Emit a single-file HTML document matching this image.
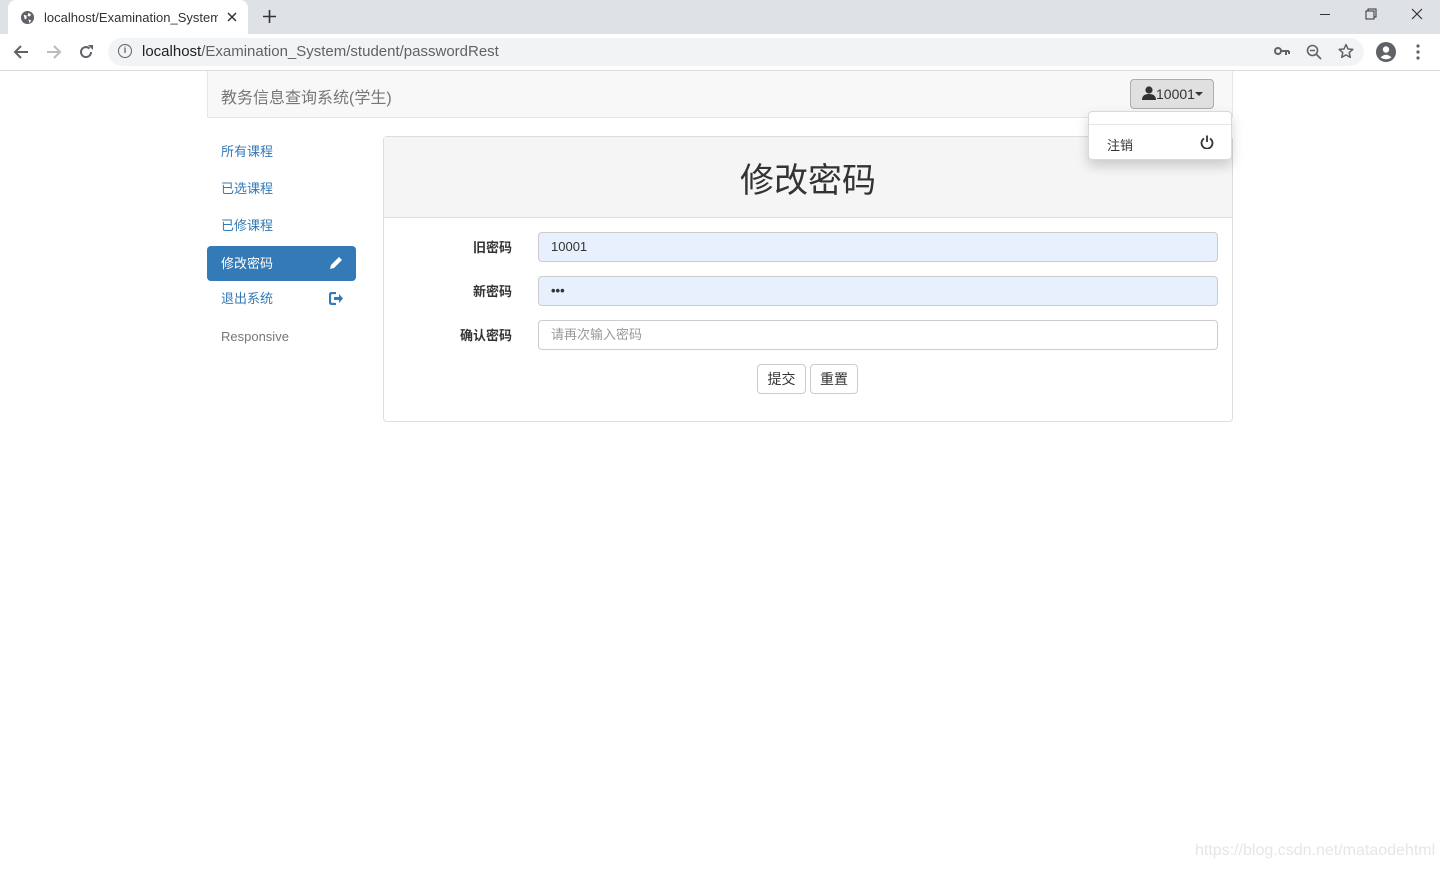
<!DOCTYPE html>
<html><head><meta charset="utf-8"><style>
*{box-sizing:border-box;margin:0;padding:0}
body{width:1440px;height:870px;overflow:hidden;background:#fff;font-family:"Liberation Sans","Noto Sans CJK SC",sans-serif;font-size:13px;color:#333;position:relative}
.abs{position:absolute}
.tabbar{left:0;top:0;width:1440px;height:34px;background:#dee1e6}
.tab{left:8px;top:0;width:240px;height:34px;background:#fff;border-radius:8px 8px 0 0}
.toolbar{left:0;top:34px;width:1440px;height:37px;background:#fff;border-bottom:1px solid #dadce0}
.omni{left:108px;top:38px;width:1256px;height:28px;background:#f1f3f4;border-radius:14px}
.nav{left:207px;top:71px;width:1026px;height:47px;background:#f8f8f8;border:1px solid #e7e7e7;border-top:none}
.side a{position:absolute;left:207px;width:149px;height:35px;line-height:35px;padding-left:14px;color:#337ab7;font-size:13px;border-radius:4px}
.panel{left:383px;top:136px;width:850px;height:286px;border:1px solid #ddd;border-radius:4px}
.ph{left:0;top:0;width:848px;height:81px;background:#f5f5f5;border-bottom:1px solid #ddd;text-align:center;font-size:34px;line-height:88px;color:#333}
.lbl{width:128px;text-align:right;font-weight:bold;font-size:13px}
.inp{left:154px;width:680px;height:30px;border:1px solid #ccc;border-radius:4px;padding-left:12px;line-height:28px;font-size:13px}
.btn{height:30px;border:1px solid #ccc;border-radius:4px;background:#fff;font-size:14px;line-height:28px;text-align:center}
</style></head><body>
<div class="abs tabbar"></div>
<div class="abs tab"></div>
<svg class="abs" style="left:20px;top:10px" width="15" height="15" viewBox="0 0 16 16"><circle cx="8" cy="8" r="7" fill="#5f6368"/><path d="M4 5l3 1 0 3 -2 1z M9 3l3 2-2 2-2-1z M9 10l3 1-2 3z" fill="#fff"/></svg>
<div class="abs" style="left:44px;top:10px;width:174px;overflow:hidden;white-space:nowrap;font-size:13px;color:#333">localhost/Examination_System/</div>
<svg class="abs" style="left:227px;top:12px" width="10" height="10"><path d="M1 1L9 9M9 1L1 9" stroke="#333" stroke-width="1.5"/></svg>
<svg class="abs" style="left:263px;top:10px" width="13" height="13"><path d="M6.5 0V13M0 6.5H13" stroke="#333" stroke-width="1.6"/></svg>
<div class="abs" style="left:1320px;top:14px;width:10px;height:1px;background:#333"></div>
<svg class="abs" style="left:1365px;top:8px" width="12" height="12"><rect x="1" y="3" width="8" height="8" fill="none" stroke="#333"/><path d="M3 3V1H11V9H9" fill="none" stroke="#333"/></svg>
<svg class="abs" style="left:1411px;top:8px" width="12" height="12"><path d="M1 1L11 11M11 1L1 11" stroke="#333" stroke-width="1.2"/></svg>
<div class="abs toolbar"></div>
<svg class="abs" style="left:13px;top:44px" width="16" height="16"><path d="M15 8H2M8 2L2 8l6 6" fill="none" stroke="#5f6368" stroke-width="2"/></svg>
<svg class="abs" style="left:46px;top:44px" width="16" height="16"><path d="M1 8H14M8 2l6 6-6 6" fill="none" stroke="#bbb" stroke-width="2"/></svg>
<svg class="abs" style="left:78px;top:44px" width="16" height="16"><path d="M13 8A5 5 0 1 1 11.5 4.5" fill="none" stroke="#5f6368" stroke-width="2"/><path d="M10 1h5v5z" fill="#5f6368"/></svg>
<div class="abs omni"></div>
<div class="abs" style="left:118px;top:44px;width:14px;height:14px;border:1.5px solid #5f6368;border-radius:50%;font-size:9px;text-align:center;line-height:11px;color:#5f6368;font-weight:bold">i</div>
<div class="abs" style="left:142px;top:43px;font-size:15px;color:#5f6368"><span style="color:#202124">localhost</span>/Examination_System/student/passwordRest</div>
<svg class="abs" style="left:1274px;top:46px" width="16" height="10"><circle cx="4" cy="5" r="3" fill="none" stroke="#5f6368" stroke-width="2"/><path d="M7 5H15M12 5V9M15 5V8" stroke="#5f6368" stroke-width="2"/></svg>
<svg class="abs" style="left:1306px;top:44px" width="16" height="16"><circle cx="6.5" cy="6.5" r="5" fill="none" stroke="#5f6368" stroke-width="1.6"/><path d="M10 10L15 15M4 6.5H9" stroke="#5f6368" stroke-width="1.6"/></svg>
<svg class="abs" style="left:1338px;top:43px" width="16" height="16"><path d="M8 1.5l2 4.5 4.8.4-3.6 3.2 1.1 4.8L8 11.9 3.7 14.4l1.1-4.8L1.2 6.4 6 6z" fill="none" stroke="#5f6368" stroke-width="1.5" stroke-linejoin="round"/></svg>
<svg class="abs" style="left:1376px;top:42px" width="20" height="20"><circle cx="10" cy="10" r="10" fill="#5f6368"/><circle cx="10" cy="7.5" r="3.2" fill="#fff"/><path d="M4.5 15.5Q10 10 15.5 15.5Q10 19 4.5 15.5z" fill="#fff"/></svg>
<svg class="abs" style="left:1416px;top:44px" width="4" height="16"><circle cx="2" cy="2" r="1.6" fill="#5f6368"/><circle cx="2" cy="8" r="1.6" fill="#5f6368"/><circle cx="2" cy="14" r="1.6" fill="#5f6368"/></svg>
<div class="abs nav"></div>
<div class="abs" style="left:221px;top:84px;font-size:16px;color:#777">教务信息查询系统(学生)</div>
<div class="abs" style="left:1130px;top:79px;width:84px;height:30px;background:#e0e0e0;border:1px solid #adadad;border-radius:4px;font-size:14px;line-height:28px;color:#333">
<svg style="position:absolute;left:11px;top:6px" width="14" height="14"><circle cx="7" cy="4" r="3.6" fill="#333"/><path d="M0 14Q0 8 7 8Q14 8 14 14z" fill="#333"/></svg>
<span style="position:absolute;left:25px;top:0">10001</span>
<svg style="position:absolute;left:64px;top:12px" width="8" height="5"><path d="M0 0H8L4 4z" fill="#333"/></svg>
</div>
<div class="side">
<a style="top:134px">所有课程</a>
<a style="top:171px">已选课程</a>
<a style="top:208px">已修课程</a>
<a style="top:246px;background:#337ab7;color:#fff">修改密码<svg style="position:absolute;left:122px;top:10px" width="14" height="14"><path d="M1 13L2 9 10 1 13 4 5 12z" fill="#fff"/></svg></a>
<a style="top:281px">退出系统<svg style="position:absolute;left:122px;top:11px" width="15" height="13"><path d="M7 1H3Q1 1 1 3V10Q1 12 3 12H7" fill="none" stroke="#337ab7" stroke-width="2.2"/><path d="M5 5H10V2L14 6.5 10 11V8H5z" fill="#337ab7"/></svg></a>
<a style="top:319px;color:#777">Responsive</a>
</div>
<div class="abs panel">
<div class="abs ph">修改密码</div>
<div class="abs lbl" style="top:100px">旧密码</div>
<div class="abs inp" style="top:95px;background:#e8f0fe">10001</div>
<div class="abs lbl" style="top:144px">新密码</div>
<div class="abs inp" style="top:139px;background:#e8f0fe;font-weight:bold">•••</div>
<div class="abs lbl" style="top:188px">确认密码</div>
<div class="abs inp" style="top:183px;color:#999">请再次输入密码</div>
<div class="abs btn" style="left:373px;top:227px;width:49px">提交</div>
<div class="abs btn" style="left:426px;top:227px;width:48px">重置</div>
</div>
<div class="abs" style="left:1088px;top:111px;width:144px;height:49px;background:#fff;border:1px solid rgba(0,0,0,.15);border-radius:4px;box-shadow:0 6px 12px rgba(0,0,0,.175)">
<div style="position:absolute;left:0;top:12px;width:142px;height:1px;background:#e5e5e5"></div>
<div style="position:absolute;left:18px;top:23px;font-size:13px">注销</div>
<svg style="position:absolute;left:111px;top:23px" width="14" height="14"><path d="M4 3.5A5.5 5.5 0 1 0 10 3.5" fill="none" stroke="#333" stroke-width="1.8"/><path d="M7 0.5V7" stroke="#333" stroke-width="1.8"/></svg>
</div>
<div class="abs" style="left:1195px;top:842px;font-size:16px;color:#e6e6e6">https://blog.csdn.net/mataodehtml</div>
</body></html>
